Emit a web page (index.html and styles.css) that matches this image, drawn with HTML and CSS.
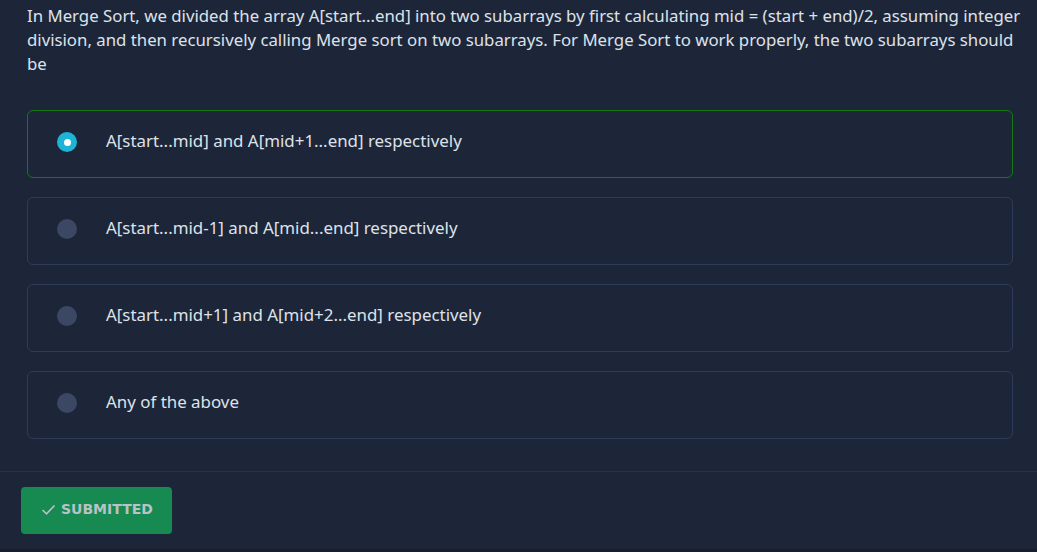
FILE: index.html
```html
<!DOCTYPE html>
<html>
<head>
<meta charset="utf-8">
<link rel="stylesheet" href="styles.css">
</head>
<body>
<div class="page">
  <div class="content">
    <p class="question">In Merge Sort, we divided the array A[start...end] into two subarrays by first calculating mid = (start + end)/2, assuming integer division, and then recursively calling Merge sort on two subarrays. For Merge Sort to work properly, the two subarrays should be</p>
    <div class="options">
      <div class="option selected"><span class="radio"></span><span class="label">A[start...mid] and A[mid+1...end] respectively</span></div>
      <div class="option"><span class="radio"></span><span class="label">A[start...mid-1] and A[mid...end] respectively</span></div>
      <div class="option"><span class="radio"></span><span class="label">A[start...mid+1] and A[mid+2...end] respectively</span></div>
      <div class="option"><span class="radio"></span><span class="label">Any of the above</span></div>
    </div>
  </div>
  <div class="footer">
    <button class="submit"><svg width="15" height="15" viewBox="0 0 15 15"><path d="M1.5 8 L5.5 11.8 L13.5 3.5" fill="none" stroke="currentColor" stroke-width="1.6"/></svg>SUBMITTED</button>
  </div>
  <div class="bottom"></div>
</div>
</body>
</html>
```
FILE: styles.css
```css
html, body {
  margin: 0;
  padding: 0;
  background: #1d2639;
}
.page {
  width: 1037px;
  height: 552px;
  display: flex;
  flex-direction: column;
  font-family: "Noto Sans", sans-serif;
  color: #dde2ea;
}
.content {
  padding: 4px 0 0 27px;
  height: 472px;
  box-sizing: border-box;
  border-bottom: 1px solid #27314a;
}
.question {
  margin: 0 12px 0 0;
  font-size: 16.8px;
  line-height: 24px;
}
.options {
  margin-top: 34px;
  margin-right: 24px;
  display: flex;
  flex-direction: column;
  gap: 19px;
}
.option {
  height: 68px;
  box-sizing: border-box;
  border: 1px solid #2f3b5a;
  border-radius: 6px;
  display: flex;
  align-items: center;
  padding-left: 29px;
  padding-bottom: 4px;
}
.option.selected {
  border-color: #137a13;
}
.radio {
  width: 20px;
  height: 20px;
  border-radius: 50%;
  background: #3b4763;
  flex: none;
  display: flex;
  align-items: center;
  justify-content: center;
}
.option.selected .radio {
  background: #1eb4d6;
}
.option.selected .radio::after {
  content: "";
  width: 7px;
  height: 7px;
  border-radius: 50%;
  background: #fff;
}
.label {
  margin-left: 29px;
  font-size: 16.9px;
  line-height: 20px;
  margin-bottom: 2px;
}
.footer {
  flex: 1;
  padding: 15px 21px 0;
}
.submit {
  width: 151px;
  height: 47px;
  border: none;
  border-radius: 4px;
  background: #168a50;
  color: #b9c2c6;
  font-family: "DejaVu Sans", sans-serif;
  font-weight: bold;
  font-size: 14px;
  display: flex;
  align-items: center;
  gap: 5px;
  padding: 0 0 3px 20px;
}
.bottom {
  height: 3px;
  background: #161d2b;
}
```
